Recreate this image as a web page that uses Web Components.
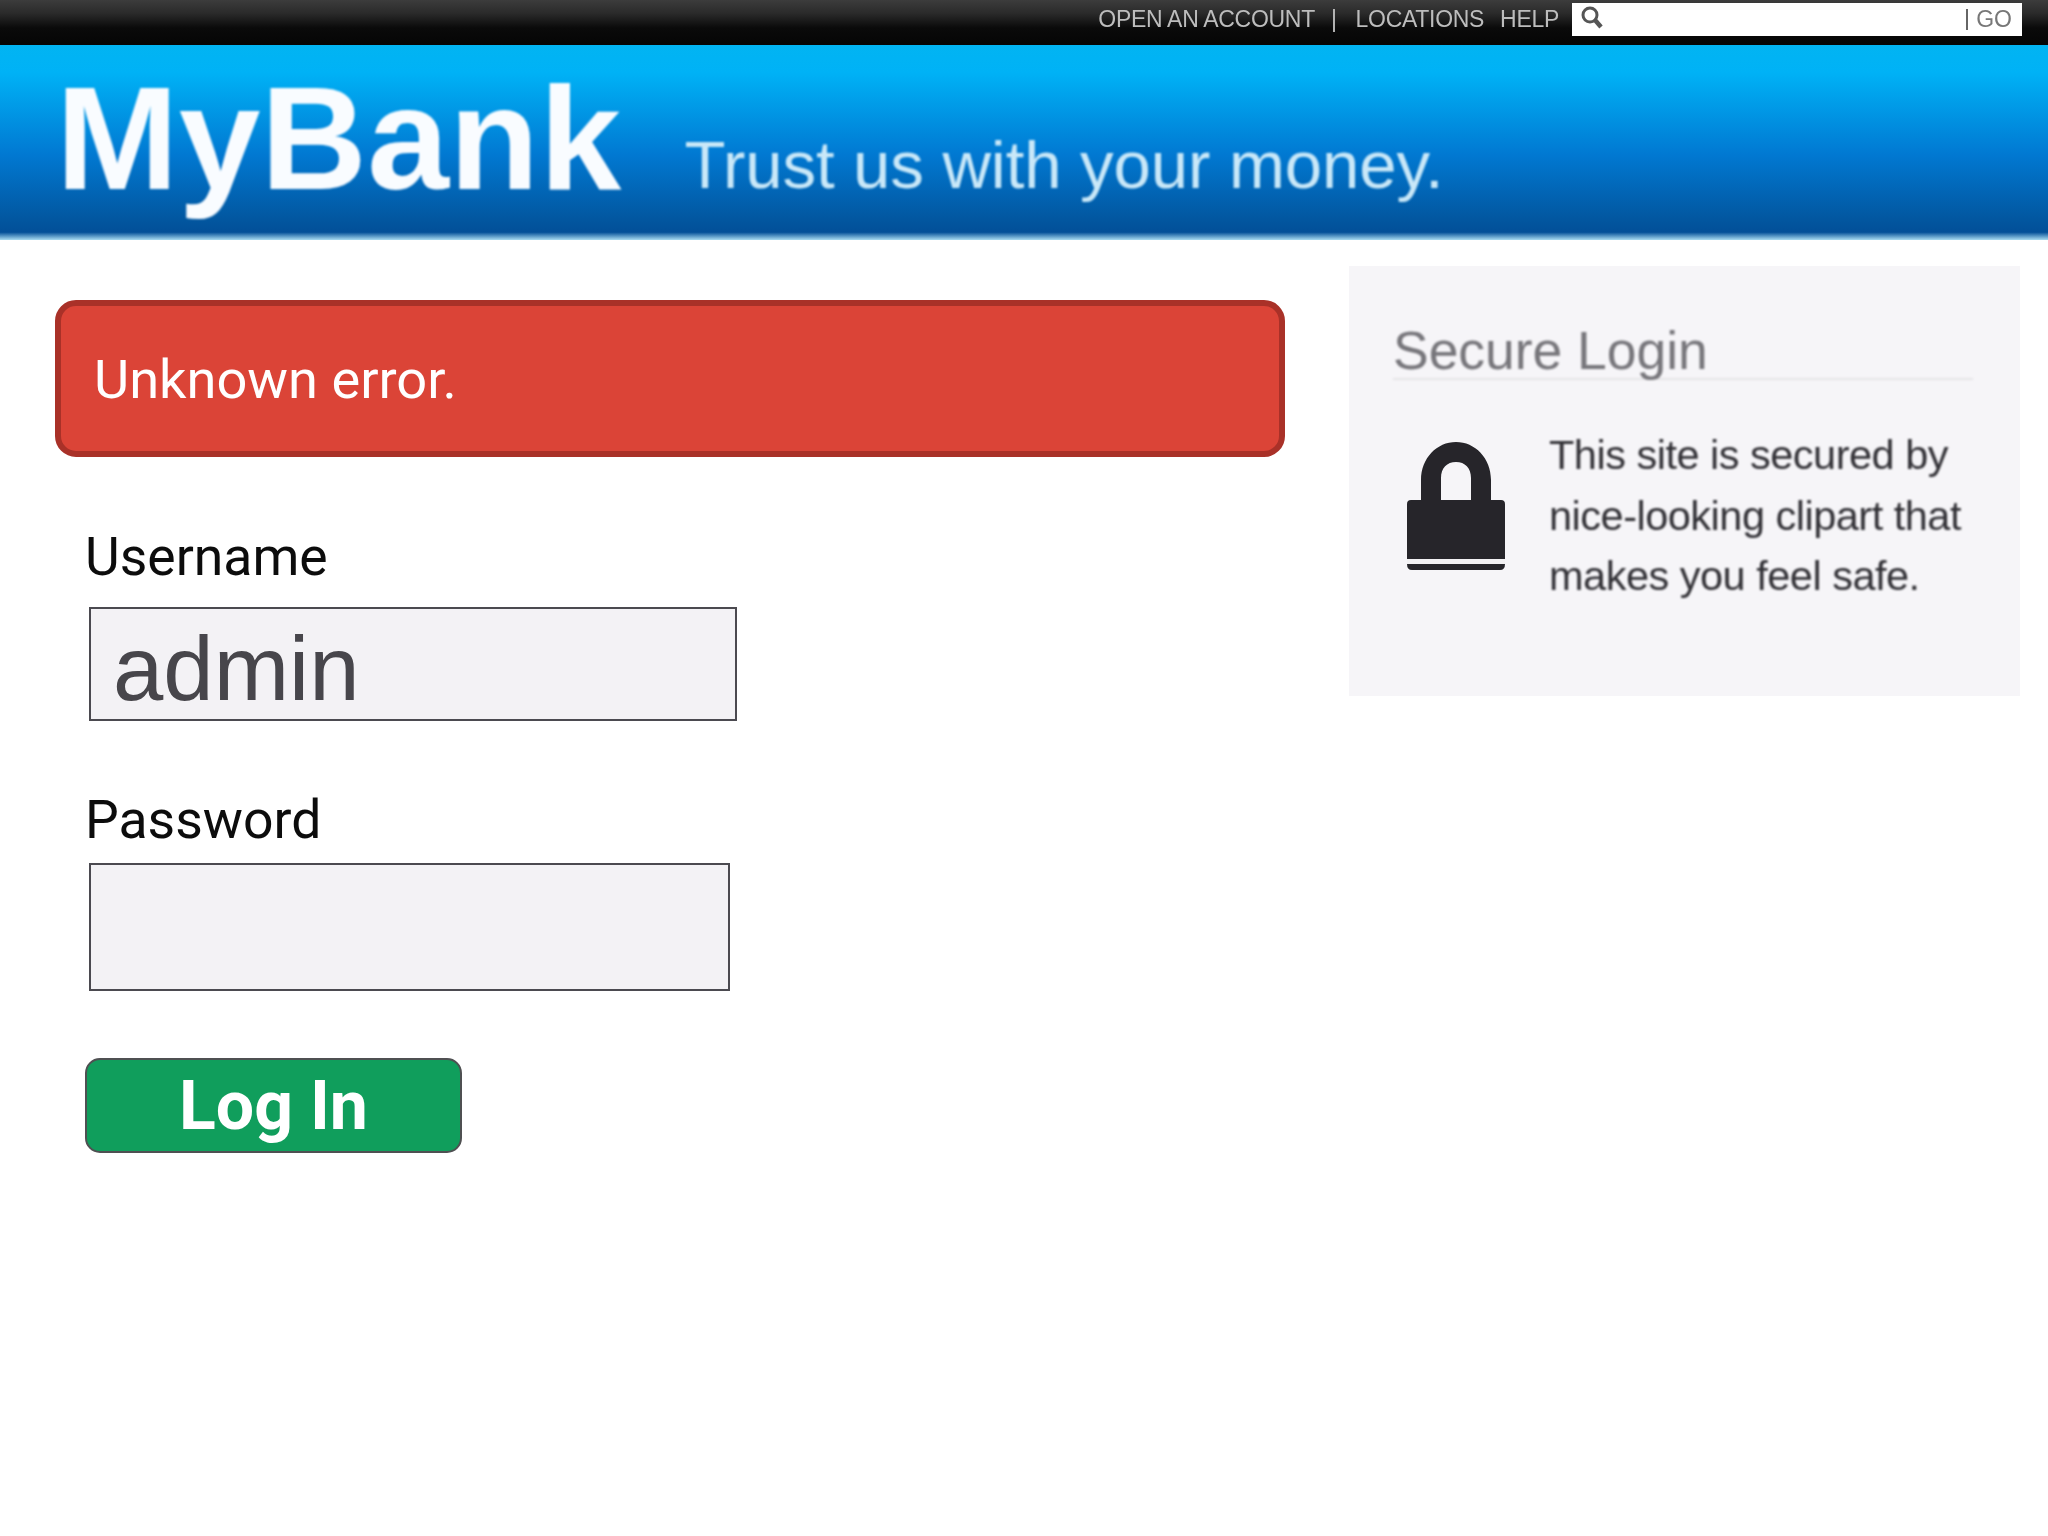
<!DOCTYPE html>
<html><head><meta charset="utf-8"><style>
html,body{margin:0;padding:0;background:#fff}
body{width:2048px;height:1536px;overflow:hidden;font-family:"Liberation Sans",sans-serif}
bank-main{display:flex}
</style></head><body>
<bank-topbar></bank-topbar>
<bank-banner></bank-banner>
<bank-main>
  <bank-form></bank-form>
  <bank-secure></bank-secure>
</bank-main>
<script>
function def(name,html){customElements.define(name,class extends HTMLElement{constructor(){super();this.attachShadow({mode:'open'}).innerHTML=html}})}
def('bank-topbar',`<style>
:host{display:flex;justify-content:flex-end;align-items:flex-start;height:45px;box-sizing:border-box;padding:3px 26px 0 0;background:linear-gradient(#3c3c3c 0,#2a2a2a 30%,#0a0a0a 62%,#050505 100%);font:23px/33px "Liberation Sans",sans-serif;color:#bdbdbd;letter-spacing:-.3px}
nav{display:flex;white-space:pre;margin-right:13px;filter:blur(.7px)}
.s{display:flex;align-items:center;width:450px;height:33px;background:#fff;color:#777;box-sizing:border-box;padding:0 10px 0 7px}
.s svg{flex:none;filter:blur(.6px);margin-top:-3px}.s i{flex:1}.s b{font-weight:400;border-left:2px solid #666;padding-left:8px;line-height:21px;letter-spacing:0;filter:blur(.6px)}
</style><nav><span>OPEN AN ACCOUNT</span><span style="margin-left:16px">|</span><span style="margin-left:19px">LOCATIONS</span><span style="margin-left:16px">HELP</span></nav>
<div class="s"><svg width="26" height="26" viewBox="0 0 26 26" fill="none" stroke="#555" stroke-width="3"><circle cx="11" cy="10" r="7"/><path d="M16 15l6 7" stroke-width="4.5"/></svg><i></i><b>GO</b></div>`);
def('bank-banner',`<style>
:host{display:flex;align-items:flex-start;height:195px;box-sizing:border-box;padding-left:56px;background:linear-gradient(#02b4f2 0,#00b2f6 14%,#0179d2 56%,#02569f 90%,#024f98 96%,#a9dcf2 100%);color:#fbfdff;overflow:hidden}
h1{margin:0;font:700 147px/1 "Liberation Sans",sans-serif;letter-spacing:.3px;height:195px;padding-top:20px;box-sizing:border-box;color:#f9fcff;filter:blur(1px)}
p{margin:0;font:400 67.2px/1 "Liberation Sans",sans-serif;margin-left:63px;padding-top:86px;color:#c9e8f8;letter-spacing:-.1px;filter:blur(.9px)}
</style><h1>MyBank</h1><p>Trust us with your money.</p>`);
def('bank-form',`<style>
:host{display:block;width:1349px;flex:none;box-sizing:border-box;padding:60px 0 0 55px;font-family:Roboto,"Liberation Sans",sans-serif}
.alert{box-sizing:border-box;width:1230px;height:157px;border:6px solid #a93128;border-radius:21px;background:#db4437;color:#fff;padding:0 33px;font:54.2px/147px Roboto,sans-serif}
.f{margin-left:31px}
label{display:block;font:53.5px/62px Roboto,sans-serif;color:#0c0c0c;margin-left:-1px}
.u{margin-top:69px}
.i{box-sizing:border-box;background:#f3f2f5;border:2.5px solid #4b4a50;margin-left:3px}
.i.a{width:648px;height:114px;margin-top:19px;font:90.5px/120px "Liberation Sans",sans-serif;color:#47464b;padding-left:22px}
.i.b{width:641px;height:128px;margin-top:12px}
.lb{margin-top:68px}
button{display:block;box-sizing:border-box;width:377px;height:95px;margin-top:67px;margin-left:-1px;border:2.5px solid #4f5052;border-radius:15px;background:#109e5c;color:#fff;font:700 68px/88px Roboto,sans-serif;padding:0}
</style><div class="alert">Unknown error.</div>
<div class="f"><label class="u">Username</label><div class="i a">admin</div>
<label class="lb">Password</label><div class="i b"></div>
<button>Log In</button></div>`);
def('bank-secure',`<style>
:host{display:block;box-sizing:border-box;width:671px;height:430px;margin-top:26px;background:#f6f5f8;padding:48px 48px 0 44px;font-family:"Liberation Sans",sans-serif}
h2{margin:0;font:400 53.5px/1.25 "Liberation Sans",sans-serif;color:#77767b;height:66px;padding-top:4px;box-sizing:border-box;border-bottom:2px solid #e6e5e8;width:580px;white-space:nowrap;letter-spacing:-.05px;filter:blur(.8px)}
.r{display:flex;margin-top:45px}
svg{flex:none;margin:17px 0 0 14px;filter:blur(.7px)}
p{margin:0 0 0 44px;font:400 41.5px/60.5px "Liberation Sans",sans-serif;color:#323136;white-space:nowrap;letter-spacing:-.5px;filter:blur(.8px)}
</style><h2>Secure Login</h2>
<div class="r"><svg width="98" height="128" viewBox="0 0 98 128"><path fill="#26252a" fill-rule="evenodd" d="M14 60V38C14 16 30 0 49 0s35 16 35 38v22H64V36c0-10-6-16-15-16s-15 6-15 16v24z"/><path fill="#26252a" d="M4 58h90q4 0 4 4v55H0V62q0-4 4-4zM0 122h98q0 6-5 6H5q-5 0-5-6z"/><rect y="117" width="98" height="5" fill="#f2f1f3"/></svg>
<p>This site is secured by<br>nice-looking clipart that<br>makes you feel safe.</p></div>`);
</script></body></html>
